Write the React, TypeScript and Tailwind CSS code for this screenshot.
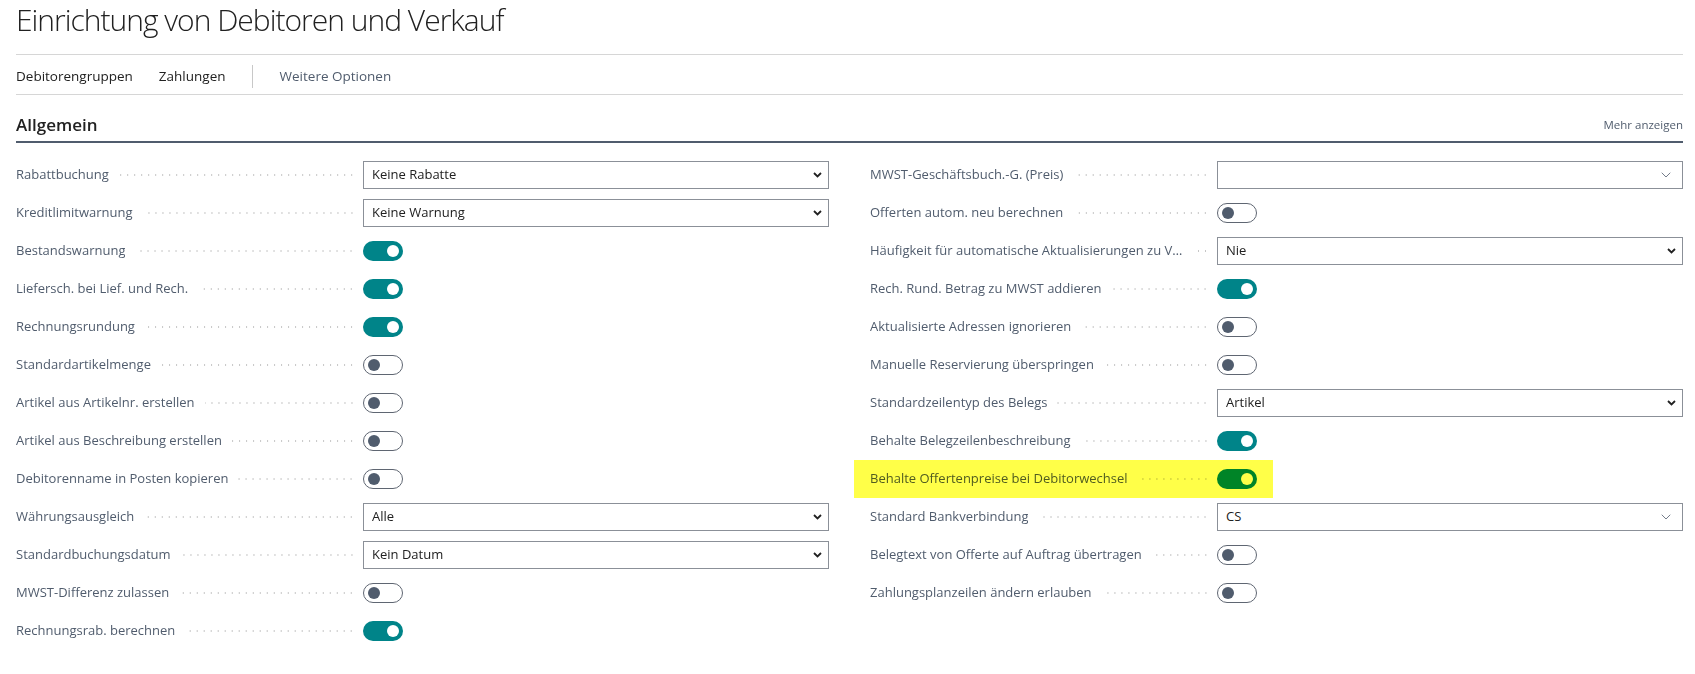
import { ChevronDown } from 'lucide-react';

type Field =
  | { kind: 'select'; value: string }
  | { kind: 'lookup'; value: string }
  | { kind: 'toggle'; on: boolean };

interface Row {
  label: string;
  field: Field;
  highlight?: boolean;
}

const leftRows: Row[] = [
  { label: 'Rabattbuchung', field: { kind: 'select', value: 'Keine Rabatte' } },
  { label: 'Kreditlimitwarnung', field: { kind: 'select', value: 'Keine Warnung' } },
  { label: 'Bestandswarnung', field: { kind: 'toggle', on: true } },
  { label: 'Liefersch. bei Lief. und Rech.', field: { kind: 'toggle', on: true } },
  { label: 'Rechnungsrundung', field: { kind: 'toggle', on: true } },
  { label: 'Standardartikelmenge', field: { kind: 'toggle', on: false } },
  { label: 'Artikel aus Artikelnr. erstellen', field: { kind: 'toggle', on: false } },
  { label: 'Artikel aus Beschreibung erstellen', field: { kind: 'toggle', on: false } },
  { label: 'Debitorenname in Posten kopieren', field: { kind: 'toggle', on: false } },
  { label: 'Währungsausgleich', field: { kind: 'select', value: 'Alle' } },
  { label: 'Standardbuchungsdatum', field: { kind: 'select', value: 'Kein Datum' } },
  { label: 'MWST-Differenz zulassen', field: { kind: 'toggle', on: false } },
  { label: 'Rechnungsrab. berechnen', field: { kind: 'toggle', on: true } },
];

const rightRows: Row[] = [
  { label: 'MWST-Geschäftsbuch.-G. (Preis)', field: { kind: 'lookup', value: '' } },
  { label: 'Offerten autom. neu berechnen', field: { kind: 'toggle', on: false } },
  {
    label: 'Häufigkeit für automatische Aktualisierungen zu Verkaufsdokumenten',
    field: { kind: 'select', value: 'Nie' },
  },
  { label: 'Rech. Rund. Betrag zu MWST addieren', field: { kind: 'toggle', on: true } },
  { label: 'Aktualisierte Adressen ignorieren', field: { kind: 'toggle', on: false } },
  { label: 'Manuelle Reservierung überspringen', field: { kind: 'toggle', on: false } },
  { label: 'Standardzeilentyp des Belegs', field: { kind: 'select', value: 'Artikel' } },
  { label: 'Behalte Belegzeilenbeschreibung', field: { kind: 'toggle', on: true } },
  {
    label: 'Behalte Offertenpreise bei Debitorwechsel',
    field: { kind: 'toggle', on: true },
    highlight: true,
  },
  { label: 'Standard Bankverbindung', field: { kind: 'lookup', value: 'CS' } },
  { label: 'Belegtext von Offerte auf Auftrag übertragen', field: { kind: 'toggle', on: false } },
  { label: 'Zahlungsplanzeilen ändern erlauben', field: { kind: 'toggle', on: false } },
];

function Toggle({ on }: { on: boolean }) {
  if (on) {
    return (
      <div className="flex h-[20px] w-[40px] items-center justify-end rounded-full bg-[#008489] pr-[4px]">
        <div className="h-[12px] w-[12px] rounded-full bg-white" />
      </div>
    );
  }
  return (
    <div className="flex h-[20px] w-[40px] items-center rounded-full border border-[#5f6672] bg-white pl-[4px]">
      <div className="h-[12px] w-[12px] rounded-full bg-[#505c6d]" />
    </div>
  );
}

function FieldControl({ field }: { field: Field }) {
  if (field.kind === 'toggle') return <Toggle on={field.on} />;
  return (
    <div className="flex h-[28px] w-full items-center justify-between border border-[#8b9098] bg-white pl-[8px]">
      <span className="text-[13px] text-[#212121]">{field.value}</span>
      {field.kind === 'select' ? (
        <svg width="9" height="6" viewBox="0 0 9 6" className="mr-[6px]">
          <path d="M1 1 L4.5 4.5 L8 1" fill="none" stroke="#212121" strokeWidth="1.8" />
        </svg>
      ) : (
        <ChevronDown size={16} strokeWidth={1.2} className="mr-[8px] text-[#505c6d]" />
      )}
    </div>
  );
}

function FormRow({ row }: { row: Row }) {
  return (
    <div className="relative flex h-[38px] items-center">
      <div className="flex w-[347px] shrink-0 items-center pr-[8px]">
        <span className="min-w-0 truncate text-[13px] text-[#505c6d]">{row.label}</span>
        <span className="ml-[10px] h-[4px] min-w-[12px] flex-1 bg-[radial-gradient(circle,#c6c6c6_0.9px,transparent_1.1px)] bg-[length:7px_4px] bg-[position:right_center] bg-repeat-x" />
      </div>
      <div className="flex flex-1 items-center">
        <FieldControl field={row.field} />
      </div>
      {row.highlight && (
        <div className="pointer-events-none absolute -left-4 top-0 bottom-0 w-[419px] bg-[#ffff48] mix-blend-multiply" />
      )}
    </div>
  );
}

export default function App() {
  return (
    <div className="min-h-screen bg-white pl-4 pr-3 font-['Open_Sans','Noto_Sans',sans-serif] text-[#212121]">
      {/* Page title */}
      <div className="flex h-[55px] items-start border-b border-[#d6d6d6]">
        <h1 className="text-[30px] leading-[40px] font-light tracking-[-1px] text-[#212121]">
          Einrichtung von Debitoren und Verkauf
        </h1>
      </div>

      {/* Action bar */}
      <div className="flex h-[40px] items-center border-b border-[#d6d6d6] pt-[4px] text-[13.5px]">
        <span>Debitorengruppen</span>
        <span className="ml-[26px]">Zahlungen</span>
        <span className="ml-[26px] h-[23px] w-px bg-[#c8c8c8]" />
        <span className="ml-[27px] text-[#505c6d]">Weitere Optionen</span>
      </div>

      {/* Section header */}
      <div className="flex h-[48px] items-end justify-between border-b-2 border-[#505c6d] pb-[4px]">
        <span className="text-[17px] leading-[24px] font-semibold text-[#212121]">Allgemein</span>
        <span className="pb-[4px] text-[11.5px] text-[#505c6d]">Mehr anzeigen</span>
      </div>

      {/* Fields */}
      <div className="flex gap-[41px] pt-[13px]">
        <div className="flex flex-1 flex-col">
          {leftRows.map((r) => (
            <FormRow key={r.label} row={r} />
          ))}
        </div>
        <div className="flex flex-1 flex-col">
          {rightRows.map((r) => (
            <FormRow key={r.label} row={r} />
          ))}
        </div>
      </div>
    </div>
  );
}
